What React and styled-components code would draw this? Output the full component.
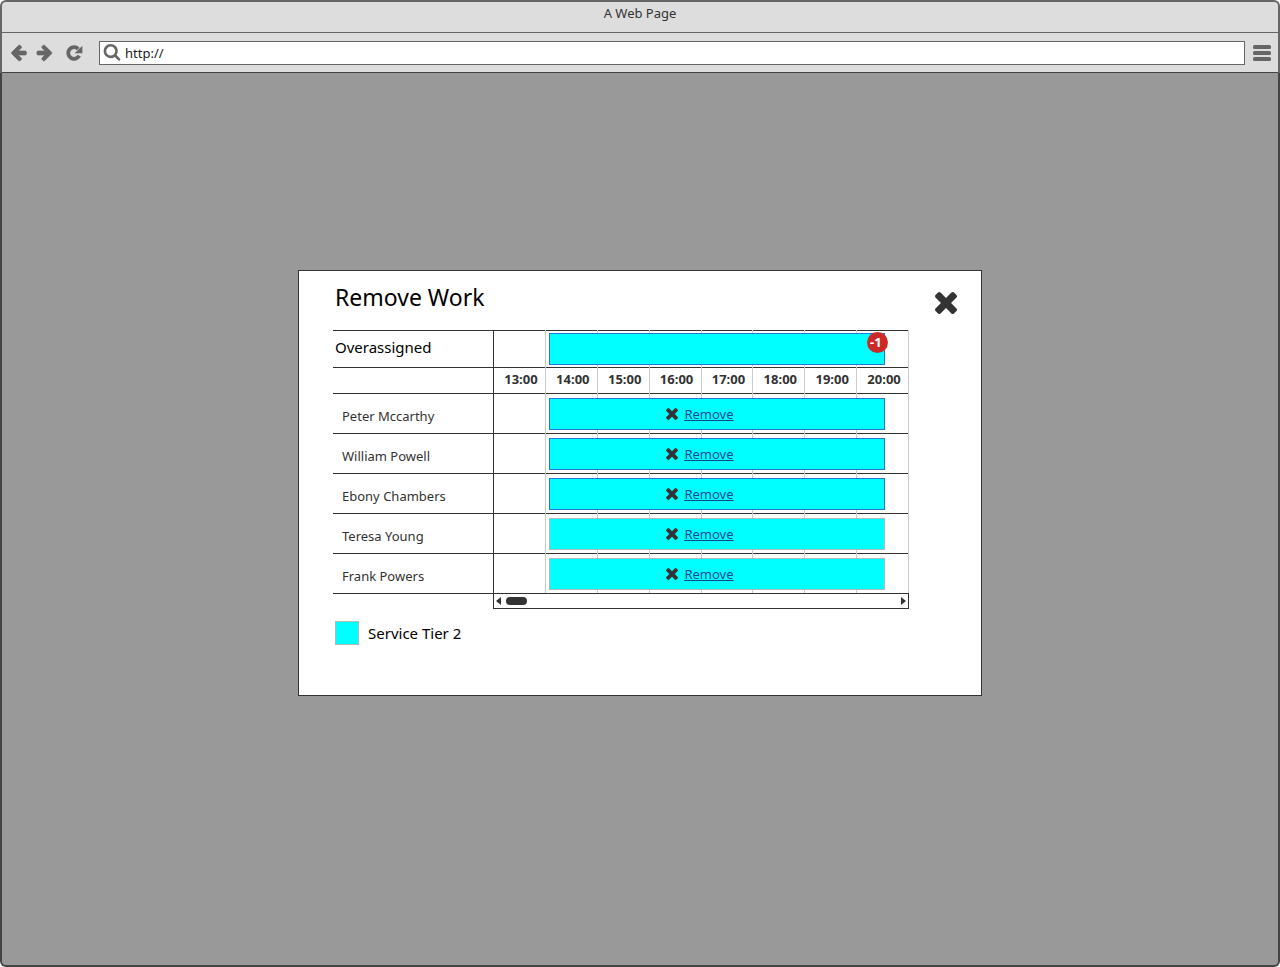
import React from "react";
import styled, { createGlobalStyle } from "styled-components";

const GlobalStyle = createGlobalStyle`
  *, *::before, *::after { box-sizing: border-box; }
  body {
    margin: 0;
    background: #fff;
    color: #333;
    font: 13px/18px "Noto Sans", "Open Sans", sans-serif;
  }
  button, input { font: inherit; color: inherit; }
`;

const Window = styled.div`
  display: flex;
  flex-direction: column;
  min-height: 100vh;
`;

const Chrome = styled.header`
  border: 2px solid #666;
  border-bottom: 0;
  border-radius: 6px 6px 0 0;
  background: #ddd;
`;

const TitleBar = styled.div`
  height: 31px;
  padding-top: 2px;
  border-bottom: 1px solid #666;
  text-align: center;
`;

const Toolbar = styled.nav`
  display: flex;
  align-items: center;
  height: 40px;
  padding: 0 7px 0 8px;
  border-bottom: 1px solid #444;
  color: #666;
`;

const IconButton = styled.button`
  display: flex;
  flex: none;
  margin: 0 ${(p) => p.$after || 0}px 0 0;
  padding: 0;
  border: 0;
  background: none;
  cursor: pointer;
`;

const AddressField = styled.label`
  display: flex;
  flex: 1;
  align-items: center;
  gap: 4px;
  height: 24px;
  margin-right: 8px;
  padding: 0 3px;
  border: 1px solid #666;
  background: #fff;
`;

const AddressInput = styled.input`
  flex: 1;
  min-width: 0;
  padding: 0;
  border: 0;
  outline: 0;
  background: none;
  color: #222;
`;

const Page = styled.main`
  flex: 1;
  border: 2px solid #444;
  border-top: 0;
  border-radius: 0 0 6px 6px;
  background: #999;
`;

const Overlay = styled.div`
  position: fixed;
  inset: 0;
  display: grid;
  place-items: center;
  padding-bottom: 1px;
`;

const Modal = styled.section`
  width: 100%;
  max-width: 684px;
  padding-bottom: 50px;
  border: 1px solid #333;
  background: #fff;
`;

const ModalHeader = styled.div`
  display: flex;
  justify-content: space-between;
  align-items: flex-end;
  padding: 11px 24px 16px 36px;
`;

const ModalTitle = styled.h1`
  margin: 0;
  padding-bottom: 2px;
  color: #000;
  font-size: 23px;
  font-weight: 400;
  line-height: 30px;
`;

const ModalBody = styled.div`
  padding: 0 72px 0 34px;
`;

const Schedule = styled.table`
  width: 100%;
  table-layout: fixed;
  border-collapse: separate;
  border-spacing: 0;
  border-bottom: 1px solid #333;
`;

const NameCol = styled.col`
  width: 161px;
`;

const Row = styled.tr`
  height: ${(p) => p.$height}px;
`;

const ruled = (side) => `
  background:
    linear-gradient(${side}, ${side}) right / 1px 100% no-repeat,
    linear-gradient(#333, #333) top / 100% 1px no-repeat;
`;

const NameCell = styled.th`
  padding: 6px 0 0 9px;
  text-align: left;
  font-weight: 400;
  ${ruled("#333")}
`;

const GroupCell = styled(NameCell)`
  padding: 0 0 4px 2px;
  color: #000;
  font-size: 15px;
`;

const HourHead = styled.th`
  padding: 0 0 2px 2px;
  font-weight: 700;
  ${ruled("#ccc")}
`;

const HourCell = styled.td`
  padding: ${(p) => p.$top || 0}px 0 0 3px;
  vertical-align: top;
  ${ruled("#ccc")}
`;

/* The bar starts in the 14:00 cell and runs over the six that follow. */
const Bar = styled.div`
  position: relative;
  z-index: 1;
  display: flex;
  align-items: center;
  justify-content: center;
  gap: 6px;
  width: calc(700% - 6px);
  height: 32px;
  padding-right: 34px;
  border: 1px solid ${(p) => (p.$muted ? "#aabbbb" : "#2277dd")};
  background: #0ff;
`;

const Badge = styled.span`
  position: absolute;
  top: -2px;
  right: -4px;
  width: 21px;
  height: 21px;
  padding-left: 3px;
  border-radius: 50%;
  background: #cc2929;
  color: #fff;
  font-weight: 700;
  line-height: 20px;
`;

const RemoveLink = styled.a`
  padding-bottom: 1px;
  color: #004b91;
  text-underline-offset: 1px;
`;

const ScrollBar = styled.div`
  display: flex;
  align-items: center;
  height: 16px;
  margin: -1px 0 0 160px;
  padding: 0 2px;
  border: 1px solid #333;
`;

const Thumb = styled.div`
  width: 21px;
  height: 8px;
  margin: 0 auto 0 5px;
  border-radius: 4px;
  background: #333;
`;

const Legend = styled.div`
  display: flex;
  align-items: center;
  gap: 9px;
  margin: 12px 0 0 2px;
  color: #000;
  font-size: 15px;
`;

const Swatch = styled.span`
  width: 24px;
  height: 24px;
  border: 1px solid #aabbbb;
  background: #0ff;
`;

const PATHS = {
  back: "M1664 896v128q0 53-32.5 90.5t-84.5 37.5h-704l293 294q38 36 38 90t-38 90l-75 76q-37 37-90 37-52 0-91-37l-651-652q-37-37-37-90 0-52 37-91l651-650q38-38 91-38 52 0 90 38l75 74q38 38 38 91t-38 91l-293 293h704q52 0 84.5 37.5t32.5 90.5z",
  forward:
    "M1728 960q0 54-37 91l-651 651q-39 37-91 37-51 0-90-37l-75-75q-38-38-38-91t38-91l293-293h-704q-52 0-84.5-37.5t-32.5-90.5v-128q0-53 32.5-90.5t84.5-37.5h704l-293-294q-38-36-38-90t38-90l75-75q38-38 90-38 53 0 91 38l651 651q37 35 37 90z",
  search:
    "M1216 832q0-185-131.5-316.5t-316.5-131.5-316.5 131.5-131.5 316.5 131.5 316.5 316.5 131.5 316.5-131.5 131.5-316.5zm512 832q0 52-38 90t-90 38q-54 0-90-38l-343-342q-179 124-399 124-143 0-273.5-55.5t-225-150-150-225-55.5-273.5 55.5-273.5 150-225 225-150 273.5-55.5 273.5 55.5 225 150 150 225 55.5 273.5q0 220-124 399l343 343q37 37 37 90z",
  cross:
    "M1490 1322q0 40-28 68l-136 136q-28 28-68 28t-68-28l-294-294-294 294q-28 28-68 28t-68-28l-136-136q-28-28-28-68t28-68l294-294-294-294q-28-28-28-68t28-68l136-136q28-28 68-28t68 28l294 294 294-294q28-28 68-28t68 28l136 136q28 28 28 68t-28 68l-294 294 294 294q28 28 28 68z",
};

function Icon({ name, size = 18, viewBox = "0 64 1792 1792", weight = 0 }) {
  return (
    <svg
      width={size}
      height={size}
      viewBox={viewBox}
      fill="currentColor"
      stroke="currentColor"
      strokeWidth={weight}
      aria-hidden="true"
    >
      <path d={PATHS[name]} />
    </svg>
  );
}

function Cross({ size }) {
  return <Icon name="cross" size={size} viewBox="302 366 1188 1188" />;
}

function Reload() {
  return (
    <svg width="18" height="18" viewBox="0 0 18 18" aria-hidden="true">
      <path d="M13.2 5A5.8 5.8 0 1 0 14.2 11.6" fill="none" stroke="currentColor" strokeWidth="3.8" />
      <path d="M17.4 1.8V9.2H9.6z" fill="currentColor" />
    </svg>
  );
}

function Arrow({ d }) {
  return (
    <svg width="5" height="8" viewBox="0 0 5 8" fill="#333" aria-hidden="true">
      <path d={d} />
    </svg>
  );
}

const HOURS = ["13:00", "14:00", "15:00", "16:00", "17:00", "18:00", "19:00", "20:00"];
const LATER_HOURS = HOURS.slice(2);

const PEOPLE = [
  { name: "Peter Mccarthy" },
  { name: "William Powell" },
  { name: "Ebony Chambers" },
  { name: "Teresa Young", muted: true },
  { name: "Frank Powers", muted: true },
];

function HourCells({ top, children }) {
  return (
    <>
      <HourCell />
      <HourCell $top={top}>{children}</HourCell>
      {LATER_HOURS.map((hour) => (
        <HourCell key={hour} />
      ))}
    </>
  );
}

export default function App() {
  return (
    <>
      <GlobalStyle />
      <Window>
        <Chrome>
          <TitleBar>A Web Page</TitleBar>
          <Toolbar>
            <IconButton aria-label="Back" $after={7}>
              <Icon name="back" viewBox="32 64 1792 1792" weight={80} />
            </IconButton>
            <IconButton aria-label="Forward" $after={12}>
              <Icon name="forward" viewBox="64 64 1792 1792" weight={80} />
            </IconButton>
            <IconButton aria-label="Reload" $after={16}><Reload /></IconButton>
            <AddressField>
              <Icon name="search" viewBox="0 128 1792 1792" />
              <AddressInput aria-label="Address" defaultValue="http://" />
            </AddressField>
            <IconButton aria-label="Menu">
              <svg width="18" height="16" viewBox="0 0 18 16" fill="currentColor" aria-hidden="true">
                <rect width="18" height="4" rx="1.5" />
                <rect y="6" width="18" height="4" rx="1.5" />
                <rect y="12" width="18" height="4" rx="1.5" />
              </svg>
            </IconButton>
          </Toolbar>
        </Chrome>
        <Page>
          <Overlay>
            <Modal role="dialog" aria-labelledby="dialog-title">
              <ModalHeader>
                <ModalTitle id="dialog-title">Remove Work</ModalTitle>
                <IconButton aria-label="Close"><Cross size={22} /></IconButton>
              </ModalHeader>
              <ModalBody>
                <Schedule>
                  <colgroup>
                    <NameCol />
                    {HOURS.map((hour) => (
                      <col key={hour} />
                    ))}
                  </colgroup>
                  <tbody>
                    <Row $height={37}>
                      <GroupCell scope="row">Overassigned</GroupCell>
                      <HourCells top={3}>
                        <Bar><Badge>-1</Badge></Bar>
                      </HourCells>
                    </Row>
                    <Row $height={26}>
                      <NameCell as="td" />
                      {HOURS.map((hour) => (
                        <HourHead key={hour} scope="col">{hour}</HourHead>
                      ))}
                    </Row>
                    {PEOPLE.map(({ name, muted }) => (
                      <Row key={name} $height={40}>
                        <NameCell scope="row">{name}</NameCell>
                        <HourCells top={5}>
                          <Bar $muted={muted}>
                            <Cross size={12} />
                            <RemoveLink href="#remove">Remove</RemoveLink>
                          </Bar>
                        </HourCells>
                      </Row>
                    ))}
                  </tbody>
                </Schedule>
                <ScrollBar>
                  <Arrow d="M5 0v8L0 4z" />
                  <Thumb />
                  <Arrow d="M0 0v8l5-4z" />
                </ScrollBar>
                <Legend><Swatch />Service Tier 2</Legend>
              </ModalBody>
            </Modal>
          </Overlay>
        </Page>
      </Window>
    </>
  );
}
